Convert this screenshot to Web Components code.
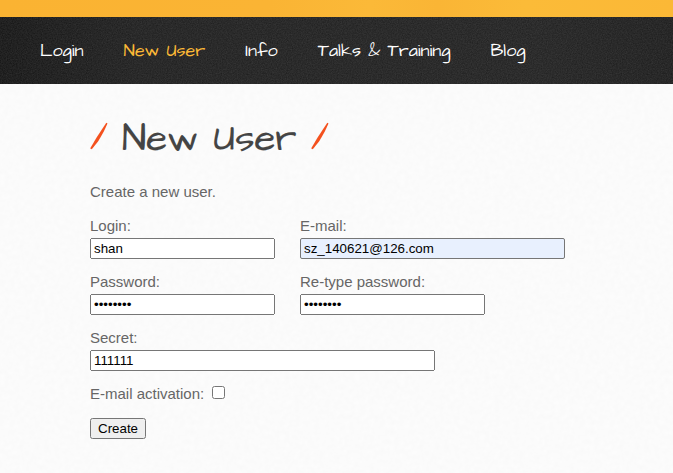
<!DOCTYPE html>
<html lang="en">
<head>
<meta charset="utf-8">
<title>New User</title>
<style>
html,body{margin:0;height:100%;overflow:hidden}
body{font-family:"Liberation Sans",Arial,sans-serif;font-size:15px;color:#666}
</style>
</head>
<body>
<user-page></user-page>
<script>
const noise = (freq, alpha, tone) => `url("data:image/svg+xml,${encodeURIComponent(`<svg xmlns="http://www.w3.org/2000/svg" width="200" height="200"><filter id="n" x="0" y="0" width="1" height="1"><feTurbulence type="fractalNoise" baseFrequency="${freq}" numOctaves="2" stitchTiles="stitch"/><feColorMatrix values="0 0 0 0 ${tone} 0 0 0 0 ${tone} 0 0 0 0 ${tone} ${alpha} 0 0 0 0"/></filter><rect width="200" height="200" filter="url(#n)"/></svg>`)}")`;

const define = (name, html, ready) => customElements.define(name, class extends HTMLElement {
  connectedCallback() {
    if (this.shadowRoot) return;
    const template = document.createElement('template');
    template.innerHTML = html;
    this.attachShadow({mode: 'open'}).append(template.content.cloneNode(true));
    if (ready) ready.call(this, this.shadowRoot);
  }
});

define('nav-link', `<style>
:host{display:block;color:#fff}
:host([active]){color:#fbb836}
a{display:block;color:inherit;white-space:nowrap;font:18px/24px "Architects Daughter",Lato,sans-serif}
</style><a><slot></slot></a>`);

define('site-nav', `<style>
:host{display:flex;box-sizing:border-box;height:67px;padding:22px 40px 0;gap:40px;
background:${noise(0.8, 0.13, 1)},linear-gradient(90deg,#111,#1b1b1b 20%,#1e1e1e 80%,#191919)}
</style>
<nav-link>Login</nav-link>
<nav-link active>New User</nav-link>
<nav-link>Info</nav-link>
<nav-link>Talks &amp; Training</nav-link>
<nav-link>Blog</nav-link>`);

define('page-title', `<style>
:host{display:flex;align-items:flex-start;color:#444;height:52px}
h1{width:175px;margin:-3px 14px 0;white-space:nowrap;-webkit-text-stroke:.15px #444;font:400 38.5px/52px "Architects Daughter",Lato,sans-serif}
svg{display:block;width:18px;height:28px;margin-top:6px;fill:#f4511e}
</style>
<svg viewBox="0 0 18 28"><path d="M16.3 .8L17.5 1.4 13.8 9.5 8.4 19 2.2 26.8Q.4 27.8 .4 26L6.6 15.5Z"/></svg>
<h1><slot></slot></h1>
<svg viewBox="0 0 18 28"><path d="M16.3 .8L17.5 1.4 13.8 9.5 8.4 19 2.2 26.8Q.4 27.8 .4 26L6.6 15.5Z"/></svg>`);

define('form-field', `<style>
:host{display:block}
label{display:block;line-height:20px;height:22px}
input{display:block;box-sizing:border-box;margin:0;height:21px;font:13.333px "Liberation Sans",Arial,sans-serif;color:#000}
:host([filled]) input{background:#e8f0fe;border:1px solid #767676;border-radius:2px;padding:2px 3px}
</style><label></label><input>`, function (root) {
  root.querySelector('label').textContent = this.getAttribute('label');
  const input = root.querySelector('input');
  input.type = this.getAttribute('type') || 'text';
  input.value = this.getAttribute('value');
  input.style.width = this.getAttribute('width') + 'px';
});

define('user-form', `<style>
:host{display:block}
.row{display:grid;grid-template-columns:210px 1fr;height:56px}
.check{display:flex;line-height:20px;height:34px}
.check input{margin:2px 0 0 8px;width:13px;height:13px}
button{display:block;box-sizing:border-box;width:56px;height:21px;margin:0;padding:1px 6px;font:13.333px "Liberation Sans",Arial,sans-serif;color:#000}
</style>
<div class="row"><form-field label="Login:" value="shan" width="185"></form-field><form-field filled label="E-mail:" value="sz_140621@126.com" width="265"></form-field></div>
<div class="row"><form-field label="Password:" type="password" value="password" width="185"></form-field><form-field label="Re-type password:" type="password" value="password" width="185"></form-field></div>
<div class="row"><form-field label="Secret:" value="111111" width="345"></form-field></div>
<div class="check"><span>E-mail activation:</span><input type="checkbox"></div>
<button>Create</button>`);

define('user-page', `<style>
:host{display:block;height:100%;background:${noise(0.2, 0.018, 0)},#fdfdfd}
.stripe{height:17px;background:linear-gradient(90deg,#fab332,#fab434 40%,#fbb938 55%,#fab535 65%,#fbbb38 78%,#fbb836)}
main{padding:32px 0 0 90px}
p{margin:14px 0;line-height:20px}
</style>
<div class="stripe"></div>
<site-nav></site-nav>
<main><page-title>New User</page-title><p>Create a new user.</p><user-form></user-form></main>`);
</script>
</body>
</html>
